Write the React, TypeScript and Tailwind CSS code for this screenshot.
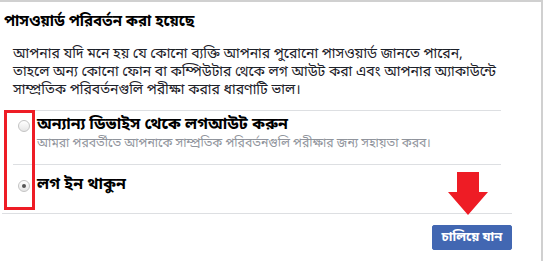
import React from 'react';

const bn = { fontFamily: '"Noto Sans Bengali", "Lohit Bengali", Vrinda, "Noto Sans", "Liberation Sans", sans-serif' };

const Radio = ({ checked }: { checked?: boolean }) => (
    <span className="flex h-[12px] w-[12px] shrink-0 items-center justify-center rounded-full border border-[#c4c4c4] bg-gradient-to-b from-[#ffffff] to-[#e6e6e6]">
        {checked && <span className="h-[4px] w-[4px] rounded-full bg-[#555]" />}
    </span>
);

export default function App() {
    return (
        <div className="relative flex h-[261px] w-[543px] flex-col overflow-hidden border-r-2 border-t-2 border-[#d0d0d0] bg-white text-[#1d2129]" style={bn}>
            <h1 className="pl-[4px] pt-[10px] text-[15px] font-bold leading-[20px] text-black">
                পাসওয়ার্ড পরিবর্তন করা হয়েছে
            </h1>

            <p className="whitespace-nowrap px-[13px] pt-[14px] text-[14px] leading-[18px] text-[#1d2129]">
                আপনার যদি মনে হয় যে কোনো ব্যক্তি আপনার পুরোনো পাসওয়ার্ড জানতে পারেন,<br />
                তাহলে অন্য কোনো ফোন বা কম্পিউটার থেকে লগ আউট করা এবং আপনার অ্যাকাউন্টে<br />
                সাম্প্রতিক পরিবর্তনগুলি পরীক্ষা করার ধারণাটি ভাল।
            </p>

            <div className="ml-[13px] mr-[40px] mt-[10px] border-t border-[#dddfe2]">
                <div className="flex items-start gap-[7px] pb-[10px] pl-[5px] pt-[5px]">
                    <span className="mt-[4px]"><Radio /></span>
                    <div>
                        <div className="text-[16px] font-bold leading-[19px] text-black">অন্যান্য ডিভাইস থেকে লগআউট করুন</div>
                        <div className="text-[12.3px] leading-[19px] text-[#90949c]">আমরা পরবর্তীতে আপনাকে সাম্প্রতিক পরিবর্তনগুলি পরীক্ষার জন্য সহায়তা করব।</div>
                    </div>
                </div>
                <div className="flex items-start gap-[7px] border-t border-[#dddfe2] pl-[5px] pt-[11px]">
                    <span className="mt-[4px]"><Radio checked /></span>
                    <div className="text-[16px] font-bold leading-[19px] text-black">লগ ইন থাকুন</div>
                </div>
            </div>

            <div className="ml-[2px] mr-[29px] mt-auto flex justify-end border-t border-[#dddfe2] pb-[11px] pt-[11px]">
                <button className="h-[25px] w-[80px] rounded-[2px] border border-[#4267b2] bg-[#4267b2] text-[13px] font-bold leading-none text-white">
                    চালিয়ে যান
                </button>
            </div>

            {/* annotation: red frame around radios */}
            <div className="pointer-events-none absolute left-[4px] top-[108px] h-[100px] w-[31px] border-[3px] border-[#ee1c25]" />

            {/* annotation: red arrow pointing at the button */}
            <svg className="pointer-events-none absolute left-[447px] top-[170px]" width="42" height="44" viewBox="0 0 42 44">
                <path d="M10 0 H32 V20 H41 L21 43 L1 20 H10 Z" fill="#ee1c25" />
            </svg>
        </div>
    );
}
